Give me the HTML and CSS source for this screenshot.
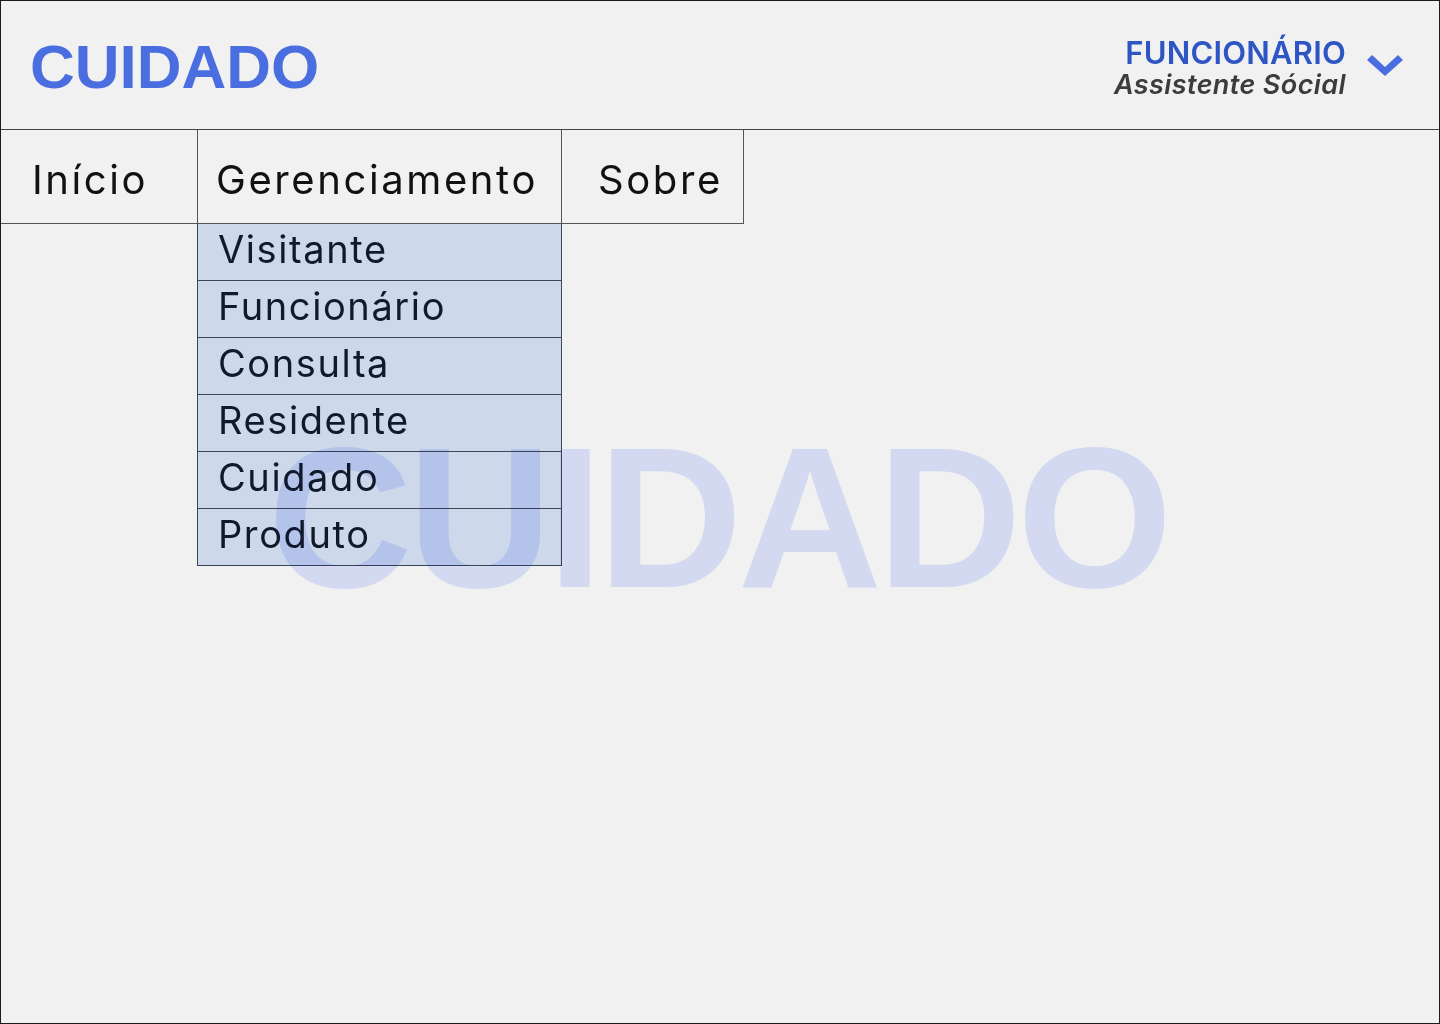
FILE: index.html
```html
<!DOCTYPE html>
<html lang="pt-BR">
<head>
<meta charset="utf-8">
<title>Cuidado</title>
<link rel="stylesheet" href="styles.css">
</head>
<body>
<div class="page">
  <header class="topbar">
    <div class="logo">CUIDADO</div>
    <div class="user">
      <div class="user-text">
        <div class="user-role">FUNCIONÁRIO</div>
        <div class="user-title">Assistente Sócial</div>
      </div>
      <svg class="chevron" width="36" height="22" viewBox="0 0 36 22">
        <polygon points="0,6 5,1 18,13 31,1 36,6 18,22" fill="#4a6ee0"/>
      </svg>
    </div>
  </header>
  <nav class="nav">
    <div class="nav-item nav-inicio">Início</div>
    <div class="nav-item nav-gerenc">
      Gerenciamento
      <ul class="dropdown">
        <li>Visitante</li>
        <li>Funcionário</li>
        <li>Consulta</li>
        <li>Residente</li>
        <li>Cuidado</li>
        <li>Produto</li>
      </ul>
    </div>
    <div class="nav-item nav-sobre">Sobre</div>
  </nav>
  <main class="content">
    <div class="watermark">CUIDADO</div>
  </main>
</div>
</body>
</html>
```
FILE: styles.css
```css
html, body {
  margin: 0;
  padding: 0;
}
body {
  background: #f1f1f1;
  font-family: Inter, "Noto Sans", sans-serif;
}
.page {
  width: 1440px;
  height: 1024px;
  box-sizing: border-box;
  border: 1px solid #1a1a1a;
  background: #f1f1f1;
  display: flex;
  flex-direction: column;
  position: relative;
  overflow: hidden;
}
.topbar {
  height: 128px;
  border-bottom: 1px solid #444;
  display: flex;
  align-items: center;
  justify-content: space-between;
  padding: 0 36px 0 29px;
}
.logo {
  font-family: "Liberation Sans", Arial, sans-serif;
  font-weight: 700;
  font-size: 62px;
  letter-spacing: 0;
  color: #4a6ee0;
  line-height: 1;
  margin-top: 4px;
}
.user {
  display: flex;
  align-items: center;
  gap: 21px;
}
.user-text {
  text-align: right;
  display: flex;
  flex-direction: column;
  margin-top: 5px;
}
.user-role {
  font-size: 31px;
  font-weight: 600;
  color: #2d55c4;
  line-height: 34px;
  letter-spacing: 0.2px;
}
.user-title {
  font-size: 27px;
  font-style: italic;
  font-weight: 600;
  color: #3c3c3c;
  line-height: 30px;
  letter-spacing: 0.4px;
}
.chevron {
  display: block;
  margin-top: 0;
}
.nav {
  display: flex;
  height: 94px;
  position: relative;
  z-index: 1;
}
.nav-item {
  box-sizing: border-box;
  height: 94px;
  border-bottom: 1px solid #555;
  display: flex;
  align-items: center;
  padding-top: 6px;
  font-size: 40px;
  letter-spacing: 2.6px;
  color: #111;
  position: relative;
}
.nav-inicio {
  width: 196px;
  padding-left: 31px;
}
.nav-gerenc {
  width: 365px;
  border-left: 1px solid #555;
  border-right: 1px solid #555;
  padding-left: 18px;
}
.nav-sobre {
  width: 182px;
  border-right: 1px solid #555;
  padding-left: 36px;
}
.dropdown {
  position: absolute;
  left: -1px;
  top: 94px;
  width: 365px;
  box-sizing: border-box;
  margin: 0;
  padding: 0;
  list-style: none;
  background: #cdd8ea;
  border-left: 1px solid #3d4659;
  border-right: 1px solid #3d4659;
}
.dropdown li {
  height: 57px;
  box-sizing: border-box;
  border-bottom: 1px solid #3d4659;
  padding-left: 20px;
  font-size: 38px;
  line-height: 50px;
  letter-spacing: 1.6px;
  color: #111a2c;
}
.content {
  flex: 1;
  position: relative;
}
.watermark {
  position: absolute;
  left: 267px;
  top: 194px;
  font-family: "Liberation Sans", Arial, sans-serif;
  font-weight: 700;
  font-size: 200px;
  line-height: 1;
  letter-spacing: -4.8px;
  color: #dfe6fe;
  mix-blend-mode: multiply;
  z-index: 2;
  pointer-events: none;
}
```
